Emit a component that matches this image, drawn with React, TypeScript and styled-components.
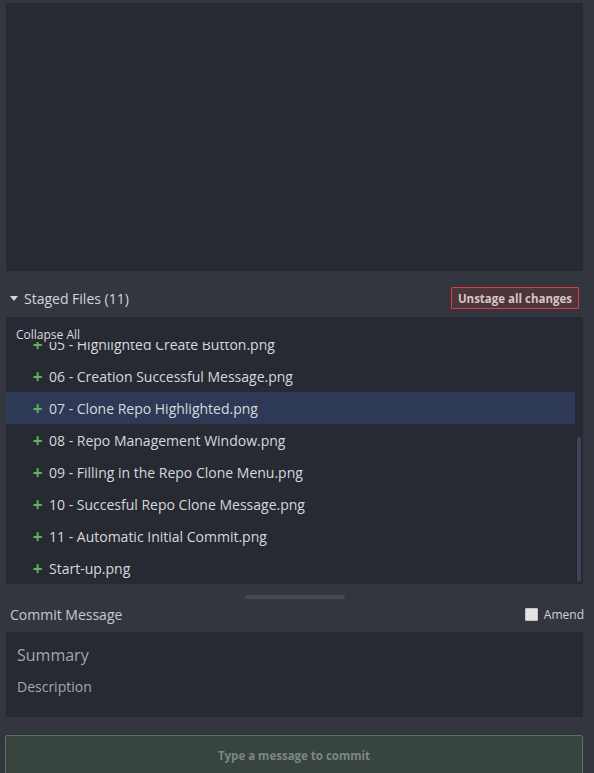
import { useLayoutEffect, useRef } from 'react'
import styled, { createGlobalStyle } from 'styled-components'

const GlobalStyle = createGlobalStyle`
  html, body {
    margin: 0;
    padding: 0;
    background: #33363f;
    font-family: "Open Sans", "Noto Sans", sans-serif;
    overflow: hidden;
  }
`

const Page = styled.div`
  width: 594px;
  height: 773px;
  display: flex;
  flex-direction: column;
  padding: 3px 11px 0 6px;
  box-sizing: border-box;
  background: #33363f;
  overflow: hidden;

  & > * {
    flex-shrink: 0;
  }
`

const Preview = styled.div`
  height: 268px;
  background: #272a33;
`

const SectionHeader = styled.div`
  height: 46px;
  display: flex;
  align-items: center;
  justify-content: space-between;
  padding: 8px 4px 0 4px;
  box-sizing: border-box;
`

const HeaderTitle = styled.div`
  display: flex;
  align-items: center;
  gap: 6px;
  color: #d3d5d9;
  font-size: 14px;
`

const Caret = styled.span`
  width: 0;
  height: 0;
  border-left: 4px solid transparent;
  border-right: 4px solid transparent;
  border-top: 5px solid #d3d5d9;
`

const UnstageButton = styled.button`
  height: 22px;
  padding: 0 6px;
  background: #4d3539;
  border: 1px solid #d9403f;
  border-radius: 1px;
  color: #d7c6c8;
  font-family: inherit;
  font-weight: 700;
  font-size: 11.5px;
  cursor: pointer;
`

const FileList = styled.div`
  position: relative;
  height: 267px;
  background: #272a33;
`

const Scroller = styled.div`
  height: 100%;
  margin-right: 8px;
  overflow: hidden;
`

const CollapseBar = styled.div`
  position: absolute;
  top: 0;
  left: 0;
  right: 8px;
  height: 25px;
  background: #272a33;
  color: #dadce0;
  font-size: 12px;
  padding: 10px 0 0 10px;
  box-sizing: border-box;
  line-height: 16px;
  z-index: 1;
`

const Row = styled.div<{ $active?: boolean }>`
  height: 32px;
  display: flex;
  align-items: center;
  padding-left: 26px;
  gap: 6px;
  background: ${(p) => (p.$active ? '#2e3a55' : 'transparent')};
  color: #d6d8dc;
  font-size: 14px;
  white-space: nowrap;
`

const Plus = styled.span`
  color: #5fb65a;
  font-size: 17px;
  font-weight: 700;
  width: 11px;
  text-align: center;
  line-height: 1;
`

const ScrollThumb = styled.div`
  position: absolute;
  right: 1px;
  top: 119px;
  width: 6px;
  height: 147px;
  background: #3f4558;
  border: 1px solid #23262e;
  border-radius: 3px;
  box-sizing: border-box;
`

const Splitter = styled.div`
  height: 18px;
  display: flex;
  justify-content: center;
  padding-top: 11px;
  box-sizing: border-box;
`

const SplitHandle = styled.div`
  width: 100px;
  height: 4px;
  border-radius: 2px;
  background: #454a55;
`

const CommitHeader = styled.div`
  height: 24px;
  display: flex;
  align-items: center;
  justify-content: space-between;
  padding-left: 4px;
  margin-bottom: 6px;
`

const Label = styled.div`
  color: #c7c9cd;
  font-size: 14px;
`

const AmendLabel = styled.label`
  display: flex;
  align-items: center;
  gap: 6px;
  color: #d0d2d6;
  font-size: 12px;
  margin-right: -1px;
`

const Check = styled.span`
  width: 11px;
  height: 11px;
  background: #e3e3e3;
  border: 1px solid #c4c4c4;
  border-radius: 1px;
`

const MessageBox = styled.div`
  height: 85px;
  background: #272a33;
  padding: 11px 11px 10px;
  box-sizing: border-box;
  display: flex;
  flex-direction: column;
  gap: 10px;
`

const Summary = styled.div`
  color: #a3a6ac;
  font-size: 16px;
  line-height: 24px;
`

const Description = styled.div`
  color: #a3a6ac;
  font-size: 14px;
  line-height: 20px;
`

const CommitButton = styled.button`
  margin-top: 18px;
  margin-left: -1px;
  height: 44px;
  background: #37443f;
  border: 1px solid #4f7a52;
  border-radius: 2px;
  color: #7e8782;
  font-family: inherit;
  font-weight: 700;
  font-size: 11.5px;
  padding-bottom: 4px;
`

const FILES = [
  '01 - Launching GitKraken.png',
  '02 - Sign in Window.png',
  '03 - Repo Management Menu.png',
  '04 - Init Tab.png',
  '05 - Highlighted Create Button.png',
  '06 - Creation Successful Message.png',
  '07 - Clone Repo Highlighted.png',
  '08 - Repo Management Window.png',
  '09 - Filling in the Repo Clone Menu.png',
  '10 - Succesful Repo Clone Message.png',
  '11 - Automatic Initial Commit.png',
  'Start-up.png',
]

export default function App() {
  const listRef = useRef<HTMLDivElement>(null)

  useLayoutEffect(() => {
    const el = listRef.current
    if (el) el.scrollTop = el.scrollHeight
  }, [])

  return (
    <Page>
      <GlobalStyle />
      <Preview />

      <SectionHeader>
        <HeaderTitle>
          <Caret />
          Staged Files (11)
        </HeaderTitle>
        <UnstageButton>Unstage all changes</UnstageButton>
      </SectionHeader>

      <FileList>
        <CollapseBar>Collapse All</CollapseBar>
        <Scroller ref={listRef}>
          {FILES.map((f) => (
            <Row key={f} $active={f.startsWith('07')}>
              <Plus>+</Plus>
              {f}
            </Row>
          ))}
        </Scroller>
        <ScrollThumb />
      </FileList>

      <Splitter>
        <SplitHandle />
      </Splitter>

      <CommitHeader>
        <Label>Commit Message</Label>
        <AmendLabel>
          <Check />
          Amend
        </AmendLabel>
      </CommitHeader>

      <MessageBox>
        <Summary>Summary</Summary>
        <Description>Description</Description>
      </MessageBox>

      <CommitButton>Type a message to commit</CommitButton>
    </Page>
  )
}
